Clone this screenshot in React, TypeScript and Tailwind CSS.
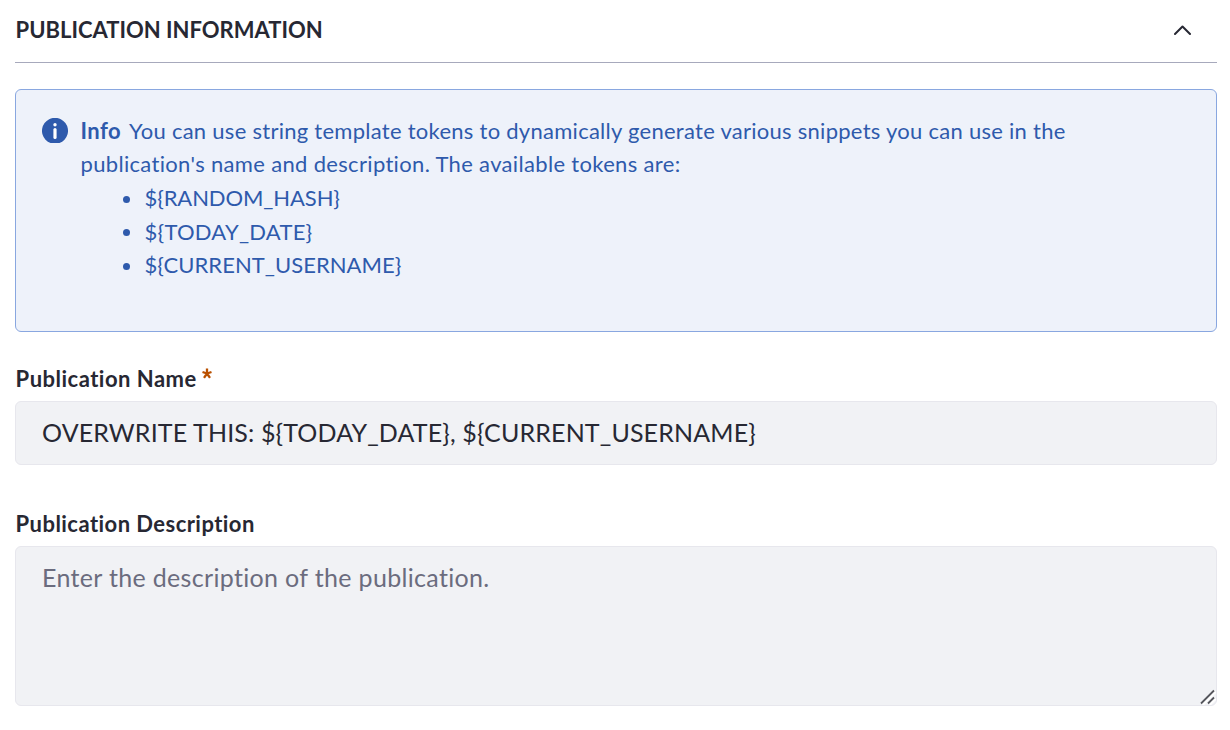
function ResizeGrip() {
  return (
    <svg width="16" height="16" viewBox="0 0 16 16" fill="none" className="absolute bottom-px right-px">
      <path d="M2.500 15.500 15.500 2.500M9.500 15.500l6-6" stroke="#fff" strokeWidth="3" />
      <path d="M1 14.500 14 1.500M8 14.500l6-6" stroke="#55565c" strokeWidth="1.800" />
    </svg>
  );
}

function Bullet() {
  return <i className="ml-[42px] mr-[15px] mt-[3px] size-[7px] rounded-full bg-[#2e5aac]" />;
}

export default function App() {
  return (
    <main className="h-[730px] w-[1230px] overflow-hidden bg-white pl-[15px] pr-[13px] font-['Lato',sans-serif] text-[22px] text-[#272833]">
      <header className="flex h-[63px] items-center justify-between border-b border-[#a7a9bc] pb-[3px] pl-[0.600px] pr-[25px]">
        <h1 className="whitespace-nowrap font-bold leading-[33px]">PUBLICATION INFORMATION</h1>
        <svg width="18" height="12" viewBox="0 0 18 12" fill="none" stroke="#272833" strokeWidth="2" strokeLinecap="round" strokeLinejoin="round" className="mt-px">
          <path d="m1 10 7.500-7.500L16 10" />
        </svg>
      </header>
      <section className="mt-[26px] flex h-[243px] rounded-[6px] border border-[#89a7e0] bg-[#eef2fa] pl-[26px] pt-[24px] leading-[33.500px] text-[#2e5aac]">
        <svg className="mt-[4px] shrink-0" width="26" height="26" viewBox="0 0 26 26">
          <path d="M8.500 25A13 13 0 1 1 17.500 25Z" fill="#2e5aac" />
          <circle cx="13" cy="6.700" r="1.700" fill="#fff" />
          <path d="M13 11.500v8" stroke="#fff" strokeWidth="3.200" strokeLinecap="round" />
        </svg>
        <div className="ml-[12.500px] whitespace-nowrap tracking-[0.270px]">
          <p className="leading-[33px]"><strong className="mr-2 font-bold tracking-[0.450px]">Info</strong>You can use string template tokens to dynamically generate various snippets you can use in the</p>
          <p className="leading-[33px] tracking-[0.330px]">publication's name and description. The available tokens are:</p>
          <ul className="pt-px tracking-[0.050px]">
            <li className="flex items-center tracking-[-0.100px]"><Bullet />{"${RANDOM_HASH}"}</li>
            <li className="flex items-center tracking-[0.250px]"><Bullet />{"${TODAY_DATE}"}</li>
            <li className="flex items-center"><Bullet />{"${CURRENT_USERNAME}"}</li>
          </ul>
        </div>
      </section>
      <div className="mt-[29px]">
        <label htmlFor="name" className="flex h-[34px] items-center gap-[5px] pl-[0.600px] font-bold tracking-[0.490px]">
          Publication Name
          <svg width="10" height="11" viewBox="0 0 10 11" className="mb-2.5" fill="none" stroke="#b95000" strokeWidth="2.300">
            <path d="M5 5.500V.500M5 5.500.500 4M5 5.500 9.500 4M5 5.500l-3 4.300M5 5.500l3 4.300" />
          </svg>
        </label>
        <input id="name" className="mt-[6px] block h-[64px] w-full rounded-[6px] border border-[#e7e7ed] bg-[#f1f2f5] px-[26px] pb-0.5 text-[25px] tracking-[0.140px] outline-none" defaultValue={"OVERWRITE THIS: ${TODAY_DATE}, ${CURRENT_USERNAME}"} />
      </div>
      <div className="mt-[41px]">
        <label htmlFor="description" className="flex h-[34px] items-center pl-[0.600px] font-bold tracking-[0.450px]">Publication Description</label>
        <div className="relative mt-[6px]">
          <textarea id="description" className="block h-[160px] w-full resize-none rounded-[6px] border border-[#e7e7ed] bg-[#f1f2f5] px-[26px] py-[12px] text-[25px] leading-[37px] tracking-[0.330px] outline-none placeholder:text-[#6b6c7e]" placeholder="Enter the description of the publication." />
          <ResizeGrip />
        </div>
      </div>
    </main>
  );
}
